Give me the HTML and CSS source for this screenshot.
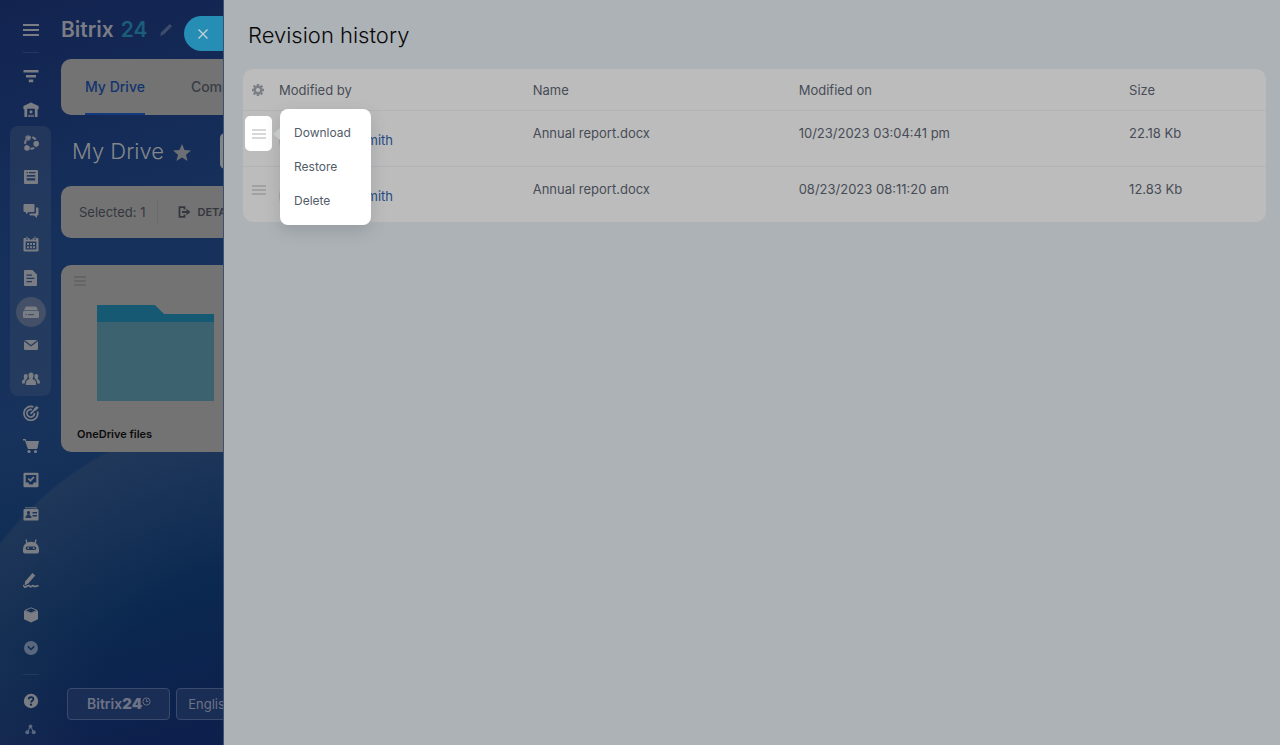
FILE: index.html
```html
<!DOCTYPE html>
<html lang="en">
  <head>
    <meta charset="UTF-8" />
    <meta name="viewport" content="width=device-width, initial-scale=1.0" />
    <title>Revision history</title>
    <link rel="stylesheet" href="styles.css" />
  </head>
  <body>
    <div class="app">
      <aside class="sidebar">
        <button class="nav-btn menu-toggle" aria-label="Menu">
          <svg class="icon" viewBox="0 0 16 16"><path d="M0 3h16M0 8h16M0 13h16" stroke="currentColor" stroke-width="1.8" /></svg>
        </button>
        <hr class="divider" />

        <nav class="nav">
          <a class="nav-btn" href="#" aria-label="Feed">
            <svg class="icon" viewBox="0 0 16 16"><path d="M.5 2h15v2.400H.5zM3 7h10v2.400H3zM5.800 11.600h4.400v2.600H5.800z" /></svg>
          </a>
          <a class="nav-btn" href="#" aria-label="Home">
            <svg class="icon" viewBox="0 0 16 16"><path fill-rule="evenodd" d="M8 .6l7.600 3.400v3.200h-1V15H1.400V7.200h-1V4zM4.200 6.800V15h1.200v-2.200h1.400V15h.6v-2.200h1.300V15h.6v-2.200h1.300V15h1.200V6.800zM6.600 8.400h2.800v2.800H6.600z" /></svg>
          </a>
          <div class="nav-group">
            <a class="nav-btn" href="#" aria-label="Collaboration">
              <svg class="icon" viewBox="0 0 16 16"><circle cx="8" cy="8" r="5.800" fill="none" stroke="currentColor" stroke-width="2" stroke-dasharray="4 1.600" /><circle class="node" cx="5" cy="3" r="2.800" /><circle cx="13.200" cy="8.800" r="2.800" /><circle cx="4" cy="13" r="2.800" /></svg>
            </a>
            <a class="nav-btn" href="#" aria-label="Tasks">
              <svg class="icon" viewBox="0 0 16 16"><path fill-rule="evenodd" d="M2 1h12q1 0 1 1v12q0 1-1 1H2q-1 0-1-1V2q0-1 1-1zM3.500 3v1.200h1.300V3zM6 3v1.200h6.500V3zM3.800 6v5.500h8.400V6z" /><path d="M3.800 7.700h8.400v1.500H3.800z" /></svg>
            </a>
            <a class="nav-btn" href="#" aria-label="Messenger">
              <svg class="icon" viewBox="0 0 16 16"><path d="M1.500 1h9q1 0 1 1v6q0 1-1 1H5.500L3 11.300V9H1.500q-1 0-1-1V2q0-1 1-1zM13 4.500h1.500q1 0 1 1v6q0 1-1 1H14V15l-3-2.500H7.500q-1 0-1-1v-1h5q1.500 0 1.500-1.500z" /></svg>
            </a>
            <a class="nav-btn" href="#" aria-label="Calendar">
              <svg class="icon" viewBox="0 0 16 16"><path fill-rule="evenodd" d="M1.500 2H3v1.500h2V2h1.300v1.500h3.400V2H11v1.500h2V2h1.500q1 0 1 1v11.500q0 1-1 1h-13q-1 0-1-1V3q0-1 1-1zM2.600 5.500v8h10.800v-8z" /><path d="M4 7h2v2H4zM7 7h2v2H7zM10 7h2v2h-2zM4 10.200h2v2H4zM7 10.200h2v2H7zM10 10.200h2v2h-2zM3.500.5h1v2.500h-1zM11.500.5h1v2.500h-1z" /></svg>
            </a>
            <a class="nav-btn" href="#" aria-label="Documents">
              <svg class="icon" viewBox="0 0 16 16"><path fill-rule="evenodd" d="M2 0h7.500L14 4.500V15q0 1-1 1H2q-1 0-1-1V1q0-1 1-1zM3.500 4.500v1.300h5.500V4.500zM3.500 7.800v1.300h8V7.800zM3.500 11v1.300h5.500V11z" /></svg>
            </a>
            <a class="nav-btn nav-btn-active" href="#" aria-label="Drive">
              <svg class="icon" viewBox="0 0 16 16"><path fill-rule="evenodd" d="M3.500 2.500h9q.8 0 1.100.7l1.400 3H1l1.400-3q.3-.7 1.100-.7zM1 7h14q1 0 1 1v5q0 1-1 1H1q-1 0-1-1V8q0-1 1-1zM2.500 10v1.300h1.300V10zM5 10v1.300h6V10z" /></svg>
            </a>
            <a class="nav-btn" href="#" aria-label="Mail">
              <svg class="icon" viewBox="0 0 16 16"><path d="M1.500 3h13L8 8zM1 4.200l7 5.200 7-5.200V12q0 1-1 1H2q-1 0-1-1z" /></svg>
            </a>
            <a class="nav-btn" href="#" aria-label="Workgroups">
              <svg class="icon icon-wide" viewBox="0 0 18 16"><path d="M9 1.500c2 0 2.800 1.500 2.500 3.300-.2 1.700-.8 2.600-1 3.200 1.700.8 3 1.200 3.300 2.500l.4 3.500H3.800l.4-3.500C4.500 9.200 5.800 8.800 7.500 8c-.2-.6-.8-1.500-1-3.200C6.200 3 7 1.500 9 1.500zM3.800 3c1.200 0 1.800.8 1.800 2 0 1.500-.6 2.300-.6 3-1.300.8-2.200 1.400-2.200 4.500H0c0-3 .5-3.500 2.500-4.500-.5-.7-.8-2-.7-3C1.900 3.800 2.600 3 3.800 3zM14.200 3c-1.200 0-1.800.8-1.800 2 0 1.500.6 2.300.6 3 1.300.8 2.200 1.400 2.200 4.500H18c0-3-.5-3.500-2.500-4.500.5-.7.8-2 .7-3-.1-1.200-.8-2-2-2z" /></svg>
            </a>
          </div>
          <a class="nav-btn" href="#" aria-label="CRM">
            <svg class="icon" viewBox="0 0 16 16"><g fill="none" stroke="currentColor" stroke-width="1.700"><path d="M10.500 2A6.900 6.900 0 1 0 14.500 6.500" /><path d="M9 4.700A3.800 3.800 0 1 0 11.500 8" /><path d="M7.500 8.800l5-5" /></g><path d="M11 3.600L14 .4l.3 1.700 1.700.3-3 3-2 .1z" /></svg>
          </a>
          <a class="nav-btn" href="#" aria-label="Store">
            <svg class="icon" viewBox="0 0 16 16"><path d="M0 1h2.600l.8 2H16l-1.500 7.200q-.2.800-1 .800H4.900L2 2.600H0z" /><circle cx="6" cy="13.500" r="1.600" /><circle cx="12.500" cy="13.500" r="1.600" /></svg>
          </a>
          <a class="nav-btn" href="#" aria-label="Sites">
            <svg class="icon" viewBox="0 0 16 16"><path fill-rule="evenodd" d="M1.500.8h13q1 0 1 1v12.500q0 1-1 1h-13q-1 0-1-1V1.800q0-1 1-1zM2.700 3v7.500h2.600l1 2h3.400l1-2h2.600V3z" /><path d="M5.200 6.500l2.200 2.200 3.600-3.800" fill="none" stroke="currentColor" stroke-width="1.700" /></svg>
          </a>
          <a class="nav-btn" href="#" aria-label="Contacts">
            <svg class="icon" viewBox="0 0 16 16"><path d="M2 1h12v1.400H2z" opacity=".6" /><path fill-rule="evenodd" d="M1.500 3h13q1 0 1 1v9.500q0 1-1 1h-13q-1 0-1-1V4q0-1 1-1zM5.500 5C4 5 3.800 6.300 4 7.300l.7 1.500C3.500 9.500 2.500 9.500 2.500 12h6c0-2.500-1-2.500-2.200-3.200L7 7.300C7.200 6.300 7 5 5.500 5zM9.500 6v1.400H14V6zM9.500 9v1.400H14V9z" /></svg>
          </a>
          <a class="nav-btn" href="#" aria-label="Automation">
            <svg class="icon" viewBox="0 0 16 16"><path d="M3 .5l1 4M13 .5l-1 4" stroke="currentColor" stroke-width="1.300" /><path fill-rule="evenodd" d="M8 2.800c4.500 0 8 2.700 8 8.200v1.500q0 2-2 2H2q-2 0-2-2V11c0-5.500 3.500-8.200 8-8.200zM4.500 7.400a1.800 1.800 0 0 0 0 3.600h7a1.800 1.800 0 0 0 0-3.600z" /><circle cx="5.300" cy="9.200" r=".9" /><circle cx="10.700" cy="9.200" r=".9" /></svg>
          </a>
          <a class="nav-btn" href="#" aria-label="Sign">
            <svg class="icon" viewBox="0 0 16 16"><path d="M9.400 0l2.900 2.600L5 10.800l-3.500 1.700.6-4zM0 11.200l1.800 2L0 14z" /><path d="M1 14.200c3-.2 3.500-2 5-1.700.8.200.5 1.500 1.800 1.200 1.200-.3 1.500-1.500 2.500-1 .8.500 1 1.300 2.200.6 1-.5 1.700-.6 3-.4" fill="none" stroke="currentColor" stroke-width="1.700" /></svg>
          </a>
          <a class="nav-btn" href="#" aria-label="Inventory">
            <svg class="icon" viewBox="0 0 16 16"><path d="M8 .8l6 2.500L8 6 2 3.300z" fill="none" stroke="currentColor" stroke-width=".9" /><path d="M1 3.600l7 2.600 7-2.600v8.700L8 15.500l-7-3.200z" /></svg>
          </a>
          <a class="nav-btn nav-btn-dim" href="#" aria-label="More">
            <svg class="icon" viewBox="0 0 16 16"><path fill-rule="evenodd" d="M8 1a7 7 0 1 1 0 14A7 7 0 0 1 8 1zM5.400 5.800L4.300 6.900 8 10.600l3.700-3.700-1.100-1.100L8 8.400z" /></svg>
          </a>
        </nav>

        <hr class="divider" />
        <button class="nav-btn help-btn" aria-label="Help">
          <svg class="icon" viewBox="0 0 16 16"><circle cx="8" cy="8" r="7.200" /><path d="M5.700 6.300c0-3 4.700-2.900 4.700-.2 0 1.700-2.300 1.700-2.300 3.400" class="icon-cut" /><circle cx="8" cy="11.700" r="1.100" class="icon-cut-dot" /></svg>
        </button>
        <button class="nav-btn nav-btn-dim sitemap-btn" aria-label="Sitemap">
          <svg class="icon icon-small" viewBox="0 0 12 12"><path d="M6 2.500L2.500 9M6 2.500L9.500 9" stroke="currentColor" stroke-width="1.200" /><circle cx="6" cy="2.500" r="2" /><circle cx="2.500" cy="9" r="2.200" /><circle cx="9.500" cy="9" r="2.200" /></svg>
        </button>
      </aside>

      <main class="main">
        <header class="brand">
          <span>Bitrix</span>
          <span class="brand-num">24</span>
          <svg class="brand-edit" viewBox="0 0 12 12"><path d="M9.800 0L12 2.200 3.800 10.600 0 12l1.300-3.700z" /></svg>
        </header>

        <nav class="tabs">
          <a class="tab tab-active" href="#">My Drive</a>
          <a class="tab" href="#">Company Drive</a>
        </nav>

        <div class="title-row">
          <h2 class="page-title">My Drive</h2>
          <svg class="star" viewBox="0 0 18 17"><path d="M9 0l2.500 6 6.500.5-5 4.200L14.600 17 9 13.600 3.400 17 5 10.700 0 6.500 6.500 6z" /></svg>
          <button class="add-btn" aria-label="Add"></button>
        </div>

        <div class="toolbar">
          <span class="selected">Selected: 1</span>
          <button class="details-btn">
            <svg class="details-icon" viewBox="0 0 12 12"><path d="M6 3.500V1.200H1v9.600h5V8.500M3.500 6h6" fill="none" stroke="currentColor" stroke-width="1.800" /><path d="M8 2.800L12 6 8 9.200z" /></svg>
            DETAILS
          </button>
        </div>

        <article class="tile">
          <svg class="tile-menu" viewBox="0 0 12 10"><path d="M0 1h12M0 5h12M0 9h12" stroke="currentColor" stroke-width="1.500" /></svg>
          <svg class="folder" viewBox="0 0 117 96"><path class="folder-back" d="M0 0h58l9 9h50v20H0z" /><path class="folder-front" d="M0 17h117v79H0z" /></svg>
          <p class="tile-name">OneDrive files</p>
        </article>

        <footer class="footer">
          <a class="footer-btn footer-logo" href="#">Bitrix<b>24</b>
            <svg class="clock" viewBox="0 0 10 10"><path d="M5 2.500V5h2M5 1a4 4 0 1 1 0 8 4 4 0 0 1 0-8z" /></svg>
          </a>
          <button class="footer-btn">English</button>
        </footer>
      </main>

      <button class="close-btn" aria-label="Close">
        <svg class="close-icon" viewBox="0 0 10 10"><path d="M.5.5l9 9M9.500.5l-9 9" /></svg>
      </button>
    </div>

    <section class="slider">
      <h1 class="slider-title">Revision history</h1>

      <table class="grid">
        <colgroup>
          <col class="col-menu" />
          <col class="col-author" />
          <col class="col-name" />
          <col class="col-date" />
          <col />
        </colgroup>
        <thead>
          <tr>
            <th class="cell-menu">
              <button class="gear-btn" aria-label="Settings">
                <svg class="gear" viewBox="0 0 12 12"><circle cx="6" cy="6" r="3.300" fill="none" stroke="currentColor" stroke-width="2.400" /><path d="M6 0v2M6 10v2M0 6h2M10 6h2M1.700 1.700l1.500 1.500M8.800 8.800l1.500 1.500M1.700 10.300l1.500-1.500M8.800 3.200l1.500-1.500" stroke="currentColor" stroke-width="2.400" /></svg>
              </button>
            </th>
            <th>Modified by</th>
            <th>Name</th>
            <th>Modified on</th>
            <th>Size</th>
          </tr>
        </thead>
        <tbody>
          <tr>
            <td class="cell-menu">
              <button class="row-btn row-btn-open" aria-label="Row actions">
                <svg class="burger" viewBox="0 0 14 10"><path d="M0 1h14M0 5h14M0 9h14" /></svg>
              </button>
              <div class="popup">
                <button class="popup-item">Download</button>
                <button class="popup-item">Restore</button>
                <button class="popup-item">Delete</button>
              </div>
            </td>
            <td class="cell-author"><div class="author"><span class="avatar"></span><a href="#">John Smith</a></div></td>
            <td>Annual report.docx</td>
            <td>10/23/2023 03:04:41 pm</td>
            <td>22.18 Kb</td>
          </tr>
          <tr>
            <td class="cell-menu">
              <button class="row-btn" aria-label="Row actions">
                <svg class="burger" viewBox="0 0 14 10"><path d="M0 1h14M0 5h14M0 9h14" /></svg>
              </button>
            </td>
            <td class="cell-author"><div class="author"><span class="avatar"></span><a href="#">John Smith</a></div></td>
            <td>Annual report.docx</td>
            <td>08/23/2023 08:11:20 am</td>
            <td>12.83 Kb</td>
          </tr>
        </tbody>
      </table>
    </section>
  </body>
</html>
```

FILE: styles.css
```css
* {
  box-sizing: border-box;
  margin: 0;
  padding: 0;
}

body {
  display: grid;
  grid-template-columns: 224px 1fr;
  min-height: 100vh;
  font-family: Inter, "Liberation Sans", sans-serif;
  font-size: 13px;
  line-height: 16px;
  color: #474c57;
  background-color: #adb2b6;
}

button {
  border: none;
  background: none;
  font: inherit;
  color: inherit;
  cursor: pointer;
}

a {
  color: inherit;
  text-decoration: none;
}

svg {
  display: block;
  flex-shrink: 0;
  fill: currentColor;
}

/* Left part: the page under the slider */
.app {
  position: relative;
  display: flex;
  overflow: hidden;
  border-right: 1px solid #3d5272;
  background:
    radial-gradient(circle at 262px 742px, transparent 170px, rgba(50, 66, 90, 0.4) 327px, transparent 330px),
    linear-gradient(165deg, #132350 0%, #15305b 30%, #17335c 55%, #0a2850 80%, #0e1f4c 100%);
}

.sidebar {
  display: flex;
  flex-direction: column;
  align-items: center;
  width: 61px;
  flex-shrink: 0;
  padding-bottom: 5px;
  color: #7a7d83;
}

.icon {
  width: 16px;
  height: 16px;
}

.icon-wide {
  width: 18px;
}

.icon-small {
  width: 11px;
  height: 11px;
}

.icon-cut {
  fill: none;
  stroke: #0c284f;
  stroke-width: 1.8;
}

.icon-cut-dot {
  fill: #0c284f;
}

.node {
  opacity: 0.8;
}

.divider {
  width: 16px;
  border: none;
  border-top: 1px solid #24375f;
}

.nav {
  display: flex;
  flex-direction: column;
  align-items: center;
  flex: 1;
  margin: 6px 0 9px;
}

.nav-btn {
  display: flex;
  flex: 1;
  align-items: center;
  justify-content: center;
  width: 30px;
}

.nav-group {
  display: flex;
  flex: 8;
  flex-direction: column;
  align-items: center;
  width: 41px;
  border-radius: 8px;
  background-color: rgba(62, 76, 104, 0.35);
}

.nav-btn-active {
  position: relative;
  isolation: isolate;
}

.nav-btn-active::before {
  content: "";
  position: absolute;
  z-index: -1;
  width: 30px;
  height: 30px;
  border-radius: 50%;
  background-color: #435067;
}

.nav-btn-dim {
  color: #59687f;
}

.menu-toggle {
  flex: none;
  height: 52px;
  padding-top: 8px;
}

.help-btn {
  flex: none;
  height: 34px;
  margin-top: 9px;
}

.sitemap-btn {
  flex: none;
  height: 22px;
}

.main {
  display: flex;
  flex-direction: column;
  flex: 1;
  min-width: 0;
}

.brand {
  display: flex;
  align-items: center;
  gap: 7px;
  height: 59px;
  font-size: 21px;
  font-weight: 600;
  color: #7b7d84;
}

.brand-num {
  color: #1b5e78;
}

.brand-edit {
  width: 12px;
  height: 12px;
  margin-left: 5px;
  color: #3e4d6b;
}

.tabs,
.toolbar,
.tile {
  width: 400px;
  border-radius: 10px;
  background-color: #737373;
}

.tabs {
  display: flex;
  gap: 46px;
  height: 56px;
  padding-left: 24px;
  font-size: 14px;
  font-weight: 500;
  line-height: 56px;
  color: #393d46;
}

.tab-active {
  border-bottom: 2px solid #123a7c;
  color: #12346f;
}

.title-row {
  display: flex;
  align-items: center;
  height: 71px;
  padding-left: 11px;
}

.page-title {
  font-size: 22px;
  font-weight: 300;
  line-height: 32px;
  white-space: nowrap;
  color: #85878b;
}

.star {
  width: 18px;
  height: 17px;
  margin: 4px 29px 0 9px;
  color: #6c6f74;
}

.add-btn {
  flex-shrink: 0;
  width: 100px;
  height: 36px;
  border-radius: 5px;
  background-color: #858585;
}

.toolbar {
  display: flex;
  align-items: center;
  height: 52px;
  padding-left: 18px;
}

.selected {
  padding: 4px 12px 4px 0;
  border-right: 1px solid #686a6d;
  color: #33373f;
}

.details-btn {
  display: flex;
  align-items: center;
  gap: 6px;
  padding-left: 20px;
  font-size: 11px;
  font-weight: 600;
  color: #33373f;
}

.details-icon {
  width: 13px;
  height: 12px;
}

.tile {
  margin-top: 27px;
  padding: 11px 0 10px 13px;
}

.tile-menu {
  width: 12px;
  height: 10px;
  color: #606164;
}

.folder {
  width: 117px;
  height: 96px;
  margin: 19px 0 25px 23px;
}

.folder-back {
  fill: #155a72;
}

.folder-front {
  fill: #3c626f;
}

.tile-name {
  padding-left: 3px;
  font-size: 11px;
  font-weight: 600;
  color: #0b0b0c;
}

.footer {
  display: flex;
  gap: 6px;
  margin-top: auto;
  padding: 0 0 25px 6px;
}

.footer-btn {
  display: flex;
  align-items: center;
  flex-shrink: 0;
  height: 32px;
  padding: 0 11px;
  border: 1px solid #3b4a6c;
  border-radius: 4px;
  background-color: #1a2d55;
  color: #6c7486;
}

.footer-logo {
  padding: 0 18px 0 19px;
  font-size: 14px;
  font-weight: 600;
}

.footer-logo b {
  font-size: 15px;
}

.clock {
  width: 9px;
  height: 9px;
  margin-bottom: 6px;
  fill: none;
  stroke: currentColor;
}

.close-btn {
  position: absolute;
  top: 16px;
  right: 0;
  width: 39px;
  height: 35px;
  padding-left: 14px;
  border-radius: 18px 0 0 18px;
  background-color: #268db4;
}

.close-icon {
  width: 10px;
  height: 10px;
  fill: none;
  stroke: #bfd0d8;
  stroke-width: 1.4;
}

/* Slider */
.slider {
  padding: 19px 14px 24px 19px;
}

.slider-title {
  padding-left: 5px;
  margin-bottom: 18px;
  font-size: 22px;
  font-weight: 300;
  line-height: 32px;
  color: #080808;
}

.grid {
  width: 100%;
  table-layout: fixed;
  border-spacing: 0;
  border-radius: 10px;
  background-color: #bcbcbc;
}

.col-menu {
  width: 36px;
}

.col-author {
  width: 24.8%;
}

.col-name {
  width: 26%;
}

.col-date {
  width: 32.3%;
}

.grid th {
  height: 42px;
  border-bottom: 1px solid #b1b3b5;
  font-weight: 400;
  text-align: left;
}

.grid td {
  height: 55px;
  padding-top: 14px;
  vertical-align: top;
}

.grid tr:not(:last-child) td {
  height: 56px;
  border-bottom: 1px solid #b1b3b5;
}

.grid .cell-menu {
  position: relative;
  padding: 5px 0 0 2px;
}

.grid .cell-author {
  padding-top: 11px;
}

.gear-btn {
  padding: 0 7px 5px;
}

.gear {
  width: 12px;
  height: 12px;
  color: #7c8086;
}

.row-btn {
  display: flex;
  align-items: center;
  justify-content: center;
  width: 27px;
  height: 35px;
  border-radius: 5px;
}

.row-btn-open {
  background-color: #fff;
}

.burger {
  width: 14px;
  height: 10px;
  fill: none;
  stroke: #96989a;
  stroke-width: 1.7;
}

.row-btn-open .burger {
  stroke: #c9cbce;
}

.author {
  display: flex;
  align-items: center;
  gap: 9px;
  color: #1f4b80;
}

.avatar {
  width: 36px;
  height: 36px;
  border-radius: 50%;
  background-color: #a4a6a8;
}

/* Row actions menu */
.popup {
  position: absolute;
  z-index: 1;
  top: -2px;
  left: 37px;
  width: 91px;
  padding: 7px 0;
  border-radius: 8px;
  background-color: #fff;
  box-shadow: 0 6px 16px rgba(60, 70, 80, 0.2);
}

.popup::before {
  content: "";
  position: absolute;
  top: 19px;
  left: -7px;
  border: 6px solid transparent;
  border-left: none;
  border-right: 7px solid #c6c7c8;
}

.popup-item {
  display: block;
  width: 100%;
  height: 34px;
  padding-left: 14px;
  font-size: 12px;
  text-align: left;
  color: #525c69;
}
```
